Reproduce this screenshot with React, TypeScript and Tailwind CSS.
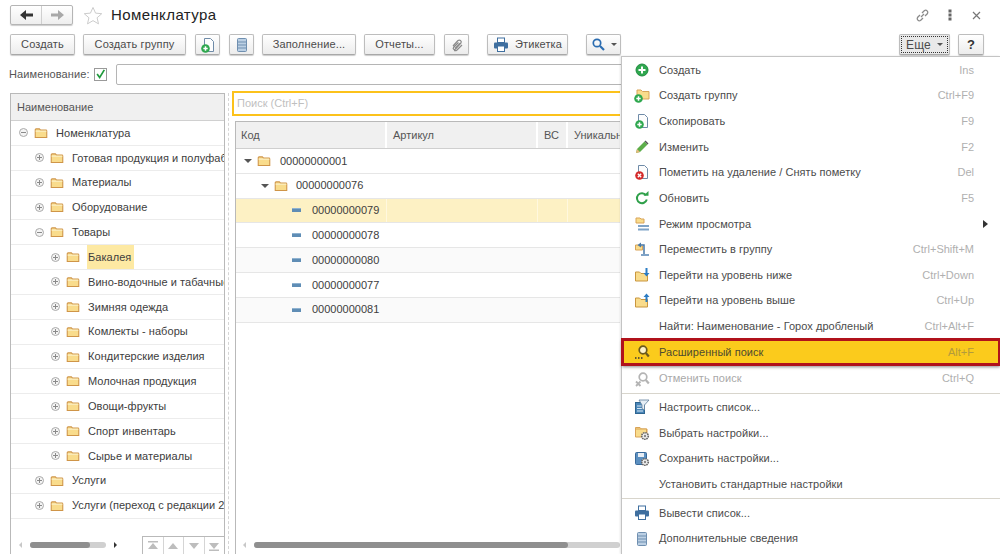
import React from "react";

const Folder = ({ className = "" }: { className?: string }) => (
  <svg width="14" height="12" viewBox="0 0 17 14" className={className}>
    <path d="M1.5 12.5V3a1 1 0 0 1 1-1h4l1.5 1.5h6.5a1 1 0 0 1 1 1v8z" fill="#f9dc8c" stroke="#cf9548" strokeWidth="1.3" />
    <rect x="2" y="4" width="13" height="1.6" fill="#fbeec0" />
  </svg>
);

const Expander = ({ open }: { open?: boolean }) => (
  <svg width="11" height="11" viewBox="0 0 11 11" className="shrink-0">
    <circle cx="5.5" cy="5.5" r="4" fill="#f4f4f4" stroke="#aaaaaa" />
    <rect x="3" y="5" width="5" height="1" fill="#8a8a8a" />
    {!open && <rect x="5" y="3" width="1" height="5" fill="#8a8a8a" />}
  </svg>
);

const Badge = ({ color, kind, x = 0, y = 7 }: { color: string; kind: "plus" | "x"; x?: number; y?: number }) => (
  <g transform={`translate(${x} ${y})`}>
    <circle cx="4.5" cy="4.5" r="4.3" fill={color} />
    {kind === "plus" ? (
      <path d="M2.3 4.5h4.4M4.5 2.3v4.4" stroke="#fff" strokeWidth="1.5" />
    ) : (
      <path d="M2.8 2.8l3.4 3.4M6.2 2.8l-3.4 3.4" stroke="#fff" strokeWidth="1.3" />
    )}
  </g>
);

const Doc = () => <path d="M4.5 1.5h6l3 3v10h-9z" fill="#fdfdfd" stroke="#6f8ba8" strokeWidth="1" />;

const S = ({ children }: { children: React.ReactNode }) => (
  <svg width="16" height="16" viewBox="0 0 16 16">{children}</svg>
);

const IconPlus = () => (
  <S>
    <circle cx="8" cy="8" r="6" fill="#2fa84f" stroke="#1f8a3e" />
    <path d="M4.5 8h7M8 4.5v7" stroke="#fff" strokeWidth="2" />
  </S>
);
const IconFolderPlus = () => (
  <S>
    <path d="M3 11V3h4l1.5 1.5H15V12H3z" fill="#f9dc8c" stroke="#d9a458" />
    <Badge color="#2fa84f" kind="plus" x={0} y={7} />
  </S>
);
const IconDocPlus = () => (
  <S>
    <Doc />
    <Badge color="#2fa84f" kind="plus" x={1} y={7} />
  </S>
);
const IconPencil = () => (
  <S>
    <path d="M2 14l1-4 7.5-7.5 3 3L6 13z" fill="#5cae4a" />
    <path d="M2 14l1-4 3 3z" fill="#e8b878" />
    <path d="M10.5 2.5l3 3 1-1-3-3z" fill="#555" />
  </S>
);
const IconDocX = () => (
  <S>
    <Doc />
    <Badge color="#d42a2a" kind="x" x={1} y={7} />
  </S>
);
const IconRefresh = () => (
  <S>
    <path d="M12 5.2A5 5 0 1 0 12.800 9.500" fill="none" stroke="#2fa04a" strokeWidth="2" />
    <path d="M9.500 5.800h5V1z" fill="#2fa04a" />
  </S>
);
const IconView = () => (
  <S>
    <path d="M2 2h4l1 1h3v4H2z" fill="#f9dc8c" stroke="#d9a458" />
    <rect x="4" y="9" width="11" height="2" fill="#7fa3c7" />
    <rect x="4" y="12.500" width="11" height="2" fill="#7fa3c7" />
  </S>
);
const IconMove = () => (
  <S>
    <path d="M1.500 9V4h3l1 1h3v4z" fill="#f9dc8c" stroke="#d9a458" />
    <path d="M10 14V4H6.500" fill="none" stroke="#4a7aa8" strokeWidth="1.500" />
    <path d="M7 1.500v5L3.500 4z" fill="#4a7aa8" />
    <rect x="7" y="13" width="8" height="2" fill="#7fa3c7" />
  </S>
);
const IconFolderArrow = ({ up }: { up?: boolean }) => (
  <S>
    <path d="M1.500 14V5h4l1.500 1.500h6.500V14z" fill="#f9dc8c" stroke="#c9963f" />
    {up ? (
      <path d="M11.500 9V4H9.500l3-3.500 3 3.500h-2v5z" fill="#2b7cc4" />
    ) : (
      <path d="M11.500 1v5H9.500l3 3.500 3-3.500h-2V1z" fill="#2b7cc4" />
    )}
  </S>
);
const IconSearch = ({ color = "#2b6cb0", dots, x }: { color?: string; dots?: boolean; x?: boolean }) => (
  <S>
    <circle cx="9" cy="6" r="3.800" fill={dots ? "#fdf3c8" : "none"} stroke={color} strokeWidth="1.700" />
    <path d="M11.800 9l3 3.500" stroke={color} strokeWidth="2.200" />
    {dots && <path d="M1 14h1.500M4 14h1.500M7 14h1.500" stroke="#333" strokeWidth="1.500" />}
    {x && <path d="M2 10.500l4.500 4.500M6.500 10.500L2 15" stroke={color} strokeWidth="1.800" />}
  </S>
);
const IconListCfg = () => (
  <S>
    <rect x="1.500" y="3.500" width="9" height="11" fill="#4a86b8" stroke="#2f6590" />
    <path d="M3 7h6M3 9.500h6M3 12h6" stroke="#d8e8f4" />
    <path d="M5 1h10l-4.500 5v5L8 9.500V6z" fill="#e6eef5" stroke="#5f7f9c" strokeWidth="0.800" />
  </S>
);
const Gear = ({ x, y }: { x: number; y: number }) => (
  <g transform={`translate(${x} ${y})`}>
    <circle cx="4.500" cy="4.500" r="3.300" fill="#f2f2f2" stroke="#666" strokeWidth="1.600" strokeDasharray="1.500 0.700" />
    <circle cx="4.500" cy="4.500" r="1.200" fill="#888" />
  </g>
);
const IconFolderGear = () => (
  <S>
    <path d="M1.500 12V2.500h4.500l1.500 1.500h5.500v5" fill="#f9dc8c" stroke="#d9a458" />
    <path d="M1.500 12V4h11v8z" fill="#f9dc8c" stroke="#d9a458" />
    <Gear x={6.500} y={6.500} />
  </S>
);
const IconSaveGear = () => (
  <S>
    <rect x="1.500" y="1.500" width="11" height="12" rx="1" fill="#5b8fc0" stroke="#38699a" />
    <rect x="4" y="2" width="6" height="4" fill="#e8eef5" />
    <Gear x={6.500} y={6.500} />
  </S>
);
const IconPrinter = () => (
  <S>
    <rect x="4.500" y="1" width="7" height="4.500" fill="#fff" stroke="#3f6f9f" />
    <rect x="1" y="5.500" width="14" height="6" rx="1" fill="#3f6f9f" />
    <rect x="4.500" y="9" width="7" height="5.500" fill="#fff" stroke="#3f6f9f" />
  </S>
);
const IconDetails = () => (
  <S>
    <rect x="3.500" y="1.500" width="9" height="13" rx="1" fill="#bcd0e4" stroke="#6f8fb0" />
    <path d="M4 5h8M4 8h8M4 11h8" stroke="#6f8fb0" />
  </S>
);

type MenuRow = { t: string; k?: string; i?: React.ReactNode; arrow?: boolean; hl?: boolean; dim?: boolean };

const group1: MenuRow[] = [
  { t: "Создать", k: "Ins", i: <IconPlus /> },
  { t: "Создать группу", k: "Ctrl+F9", i: <IconFolderPlus /> },
  { t: "Скопировать", k: "F9", i: <IconDocPlus /> },
  { t: "Изменить", k: "F2", i: <IconPencil /> },
  { t: "Пометить на удаление / Снять пометку", k: "Del", i: <IconDocX /> },
  { t: "Обновить", k: "F5", i: <IconRefresh /> },
  { t: "Режим просмотра", i: <IconView />, arrow: true },
  { t: "Переместить в группу", k: "Ctrl+Shift+M", i: <IconMove /> },
  { t: "Перейти на уровень ниже", k: "Ctrl+Down", i: <IconFolderArrow /> },
  { t: "Перейти на уровень выше", k: "Ctrl+Up", i: <IconFolderArrow up /> },
  { t: "Найти: Наименование - Горох дробленый", k: "Ctrl+Alt+F" },
  { t: "Расширенный поиск", k: "Alt+F", i: <IconSearch color="#6b5a1e" dots />, hl: true },
  { t: "Отменить поиск", k: "Ctrl+Q", i: <IconSearch color="#b4b4b4" x />, dim: true },
];
const group2: MenuRow[] = [
  { t: "Настроить список...", i: <IconListCfg /> },
  { t: "Выбрать настройки...", i: <IconFolderGear /> },
  { t: "Сохранить настройки...", i: <IconSaveGear /> },
  { t: "Установить стандартные настройки" },
];
const group3: MenuRow[] = [
  { t: "Вывести список...", i: <IconPrinter /> },
  { t: "Дополнительные сведения", i: <IconDetails /> },
];

const Item = ({ r }: { r: MenuRow }) => (
  <div
    className={
      "flex items-center h-[25.67px] pl-[6px] pr-[26px] shrink-0 " +
      (r.hl
        ? "relative mb-[1px] bg-[#fbcb1c] outline-[3px] outline-[#b0121b] -outline-offset-[2px] shadow-[0_2px_3px_rgba(0,0,0,0.45)] text-[#4d4a30]"
        : r.dim
        ? "text-[#a9a9a9]"
        : "text-[#4b4b4b]")
    }
  >
    <span className="w-[16px] h-[16px] flex items-center justify-center shrink-0 ml-[6px]">{r.i}</span>
    <span className="ml-[9px] flex-1 whitespace-nowrap tracking-[0.05px]">{r.t}</span>
    {r.k && <span className={r.hl ? "text-[#b29a3c]" : "text-[#b0b0b0]"}>{r.k}</span>}
    {r.arrow && (
      <span className="w-0 h-0 border-y-[4px] border-y-transparent border-l-[5px] border-l-[#333] -mr-[14px]" />
    )}
  </div>
);

const Btn = ({ children, className = "" }: { children: React.ReactNode; className?: string }) => (
  <div
    className={
      "h-[21px] flex items-center justify-center rounded-[2px] border border-[#bdbdbd] border-b-[#a8a8a8] bg-gradient-to-b from-[#ffffff] to-[#ececec] shadow-[0_1px_1px_rgba(0,0,0,0.2)] text-[#4b4b4b] tracking-[0.15px] whitespace-nowrap shrink-0 " +
      className
    }
  >
    {children}
  </div>
);

const tree: { t: string; lvl: number; open?: boolean; sel?: boolean }[] = [
  { t: "Номенклатура", lvl: 0, open: true },
  { t: "Готовая продукция и полуфабрикаты", lvl: 1 },
  { t: "Материалы", lvl: 1 },
  { t: "Оборудование", lvl: 1 },
  { t: "Товары", lvl: 1, open: true },
  { t: "Бакалея", lvl: 2, sel: true },
  { t: "Вино-водочные и табачные изделия", lvl: 2 },
  { t: "Зимняя одежда", lvl: 2 },
  { t: "Комлекты - наборы", lvl: 2 },
  { t: "Кондитерские изделия", lvl: 2 },
  { t: "Молочная продукция", lvl: 2 },
  { t: "Овощи-фрукты", lvl: 2 },
  { t: "Спорт инвентарь", lvl: 2 },
  { t: "Сырье и материалы", lvl: 2 },
  { t: "Услуги", lvl: 1 },
  { t: "Услуги (переход с редакции 2.5)", lvl: 1 },
];

const treePad = ["pl-[7px]", "pl-[23px]", "pl-[39px]"];

const codes: { c: string; lvl: number; folder?: boolean; sel?: boolean; alt?: boolean }[] = [
  { c: "00000000001", lvl: 0, folder: true },
  { c: "00000000076", lvl: 1, folder: true },
  { c: "00000000079", lvl: 2, sel: true },
  { c: "00000000078", lvl: 2 },
  { c: "00000000080", lvl: 2, alt: true },
  { c: "00000000077", lvl: 2 },
  { c: "00000000081", lvl: 2, alt: true },
];
const codePad = ["pl-[8px]", "pl-[25px]", "pl-[56px]"];

const NavIcon = ({ i }: { i: number }) => (
  <svg width="12" height="10" viewBox="0 0 12 10" fill="#bdbdbd">
    {i === 0 && <path d="M1 0h10v1.500H1zM6 2l5 6H1z" />}
    {i === 1 && <path d="M6 2l5 6H1z" />}
    {i === 2 && <path d="M6 8L1 2h10z" />}
    {i === 3 && <path d="M1 8.500h10V10H1zM6 8L1 2h10z" />}
  </svg>
);

export default function App() {
  return (
    <div
      className="relative w-[1000px] h-[554px] overflow-hidden bg-white text-[11px] text-[#3d3d3d] flex flex-col"
      style={{ fontFamily: '"Liberation Sans", Arial, sans-serif' }}
    >
      {/* header */}
      <div className="flex items-center h-[29px] pl-[10px] pt-[1px] shrink-0">
        <div className="flex h-[20px] w-[63px] rounded-[2px] border border-[#b5b5b5] bg-gradient-to-b from-white to-[#eeeeee] shadow-[0_1px_1px_rgba(0,0,0,0.2)]">
          <div className="w-[31px] flex items-center justify-center border-r border-[#cfcfcf]">
            <svg width="13" height="10" viewBox="0 0 13 10">
              <path d="M6 0v3.500h7v3H6V10L0 5z" fill="#333" />
            </svg>
          </div>
          <div className="flex-1 flex items-center justify-center">
            <svg width="13" height="10" viewBox="0 0 13 10">
              <path d="M7 0v3.500H0v3h7V10l6-5z" fill="#a8a8a8" />
            </svg>
          </div>
        </div>
        <svg width="20" height="19" viewBox="0 0 21 20" className="ml-[10px]">
          <path d="M10.500 1.500l2.700 6 6.500.6-4.900 4.300 1.500 6.400-5.800-3.400-5.800 3.400 1.500-6.400L1.300 8.100l6.500-.6z" fill="#fff" stroke="#c9c9c9" />
        </svg>
        <div className="ml-[8px] text-[15px] text-[#222] tracking-[0.4px]">Номенклатура</div>
        <div className="ml-auto flex items-center pr-[19px] gap-[18px] text-[#777]">
          <svg width="15" height="15" viewBox="0 0 15 15" fill="none" stroke="#8a8a8a" strokeWidth="1.300">
            <path d="M6 9l3-3" />
            <path d="M5 7L2.500 9.500a2.200 2.200 0 0 0 3 3L8 10" />
            <path d="M7 5l2.500-2.500a2.200 2.200 0 0 1 3 3L10 8" />
          </svg>
          <svg width="4" height="12" viewBox="0 0 4 12">
            <rect x="0.500" y="0.500" width="3" height="3" fill="#666" />
            <rect x="0.500" y="4.500" width="3" height="3" fill="#666" />
            <rect x="0.500" y="8.500" width="3" height="3" fill="#666" />
          </svg>
          <svg width="9" height="9" viewBox="0 0 9 9" stroke="#777" strokeWidth="1.200" className="ml-[2px]">
            <path d="M1 1l7 7M8 1l-7 7" />
          </svg>
        </div>
      </div>

      {/* toolbar */}
      <div className="flex items-center h-[21px] mt-[5px] pl-[10px] shrink-0">
        <Btn className="w-[65px]">Создать</Btn>
        <Btn className="w-[103px] ml-[8px]">Создать группу</Btn>
        <Btn className="w-[25px] ml-[9px]">
          <IconDocPlus />
        </Btn>
        <Btn className="w-[25px] ml-[9px]">
          <IconDetails />
        </Btn>
        <Btn className="w-[94px] ml-[8px]">Заполнение...</Btn>
        <Btn className="w-[71px] ml-[8px]">Отчеты...</Btn>
        <Btn className="w-[25px] ml-[9px]">
          <svg width="14" height="14" viewBox="0 0 14 14" fill="none" stroke="#8a8a8a" strokeWidth="1.200">
            <path d="M3 8l5-5.500a2 2 0 0 1 3 2.500L5.500 11a1.200 1.200 0 0 1-2-1.500L8.500 4.500" />
            <path d="M5 10.500l5.500-5.500M4 12.500a3 3 0 0 0 3-.5l5-5" />
          </svg>
        </Btn>
        <Btn className="w-[81px] ml-[18px] gap-[6px]">
          <IconPrinter />
          <span>Этикетка</span>
        </Btn>
        <Btn className="w-[35px] ml-[18px] gap-[6px] justify-start pl-[5px]">
          <svg width="13" height="13" viewBox="0 0 13 13" fill="none" stroke="#2b6cb0" strokeWidth="1.700">
            <circle cx="5" cy="5" r="3.700" />
            <path d="M8 8l4 4" strokeWidth="2.200" />
          </svg>
          <span className="w-0 h-0 border-x-[3px] border-x-transparent border-t-[3px] border-t-[#555]" />
        </Btn>
        <Btn className="w-[51px] ml-[278px] gap-[6px] bg-none bg-[#e9e9e9] outline-1 outline-dotted outline-[#333] -outline-offset-[3px] text-[12px]">
          <span>Еще</span>
          <span className="w-0 h-0 border-x-[3px] border-x-transparent border-t-[3px] border-t-[#555]" />
        </Btn>
        <Btn className="w-[26px] ml-[8px] font-bold text-[13px] text-[#333]">?</Btn>
      </div>

      {/* filter */}
      <div className="flex items-center h-[21px] mt-[9px] pl-[9px] shrink-0">
        <span className="w-[85px] text-[#555] whitespace-nowrap tracking-[0.1px]">Наименование:</span>
        <span className="w-[13px] h-[13px] border border-[#9a9a9a] bg-white flex items-center justify-center">
          <svg width="13" height="13" viewBox="0 0 13 13" fill="none" stroke="#1f9a3c" strokeWidth="2">
            <path d="M2.500 6l3 4 5.500-9" />
          </svg>
        </span>
        <div className="ml-[9px] w-[520px] h-[21px] border border-[#b5b5b5] rounded-[2px] bg-white" />
      </div>

      {/* body */}
      <div className="flex flex-1 min-h-0 mt-[8px] pl-[10px]">
        {/* left */}
        <div className="w-[215px] shrink-0 border-x border-t border-[#b9b9b9] flex flex-col">
          <div className="h-[27px] shrink-0 bg-[#f0f0f0] border-b border-[#d0d0d0] flex items-center pl-[6px] text-[#555]">
            Наименование
          </div>
          <div className="flex-1 min-h-0">
            {tree.map((n) => (
              <div
                key={n.t}
                className={"h-[24.85px] flex items-center border-b border-[#ececec] overflow-hidden whitespace-nowrap " + treePad[n.lvl]}
              >
                <Expander open={n.open} />
                <Folder className="ml-[5px] shrink-0" />
                <span className={"ml-[7px] px-[1px] h-full flex items-center tracking-[0.05px] " + (n.sel ? "bg-[#fde9a3] pr-[3px]" : "")}>{n.t}</span>
              </div>
            ))}
          </div>
          <div className="h-[18px] shrink-0 flex items-center">
            <span className="ml-[8px] w-0 h-0 border-y-[3px] border-y-transparent border-r-[3px] border-r-[#c8c8c8]" />
            <div className="ml-[8px] w-[76px] h-[6px] rounded-full bg-[#d0d0d0]">
              <div className="w-[60px] h-full rounded-full bg-[#8f8f8f]" />
            </div>
            <span className="ml-[8px] w-0 h-0 border-y-[3px] border-y-transparent border-l-[3px] border-l-[#333]" />
            <div className="ml-[25px] flex-1 h-full flex border-l border-t border-[#b9b9b9]">
              {[0, 1, 2, 3].map((i) => (
                <div key={i} className="flex-1 flex items-center justify-center border-r border-[#d5d5d5] last:border-r-0">
                  <NavIcon i={i} />
                </div>
              ))}
            </div>
          </div>
        </div>

        {/* splitter */}
        <div className="w-[7px] shrink-0 pl-[3px]">
          <div className="h-full w-0 border-r border-dashed border-[#d5d5d5]" />
        </div>

        {/* right */}
        <div className="flex-1 min-w-0 flex flex-col -mt-[2px] pr-[380px]">
          <div className="h-[25px] shrink-0 border-2 border-r-0 border-[#fcc21b] flex items-center pl-[3px] text-[#bfbfbf]">Поиск (Ctrl+F)</div>
          <div className="mt-[5px] ml-[3px] flex-1 min-h-0 border-l border-t border-[#b9b9b9] flex flex-col">
            <div className="h-[27px] shrink-0 flex bg-[#f0f0f0] border-b border-[#cfcfcf] text-[#555]">
              <div className="w-[151px] border-r-2 border-white flex items-center pl-[5px]">Код</div>
              <div className="w-[151px] border-r-2 border-white flex items-center pl-[6px]">Артикул</div>
              <div className="w-[30px] border-r-2 border-white flex items-center pl-[6px]">ВС</div>
              <div className="flex-1 flex items-center pl-[6px] whitespace-nowrap overflow-hidden">Уникальн</div>
            </div>
            <div className="flex-1 min-h-0">
              {codes.map((r) => (
                <div
                  key={r.c}
                  className={
                    "h-[24.8px] flex items-stretch border-b border-[#e6e6e6] " +
                    (r.sel ? "bg-[#fdf1c4]" : r.alt ? "bg-[#fafafa]" : "")
                  }
                >
                  <div className={"w-[151px] flex items-center shrink-0 " + codePad[r.lvl] + (r.sel ? " border-r border-[#fff8de]" : "")}>
                    {r.folder ? (
                      <>
                        <span className="w-0 h-0 border-x-[4px] border-x-transparent border-t-[4px] border-t-[#555]" />
                        <Folder className="ml-[5px]" />
                        <span className={r.lvl === 0 ? "ml-[9px]" : "ml-[8px]"}>{r.c}</span>
                      </>
                    ) : (
                      <>
                        <span className="w-[9px] h-[4px] bg-[#5f8db5] border-t border-[#8fb2d0]" />
                        <span className="ml-[11px]">{r.c}</span>
                      </>
                    )}
                  </div>
                  {r.sel && (
                    <>
                      <div className="w-[151px] border-r border-[#fff8de]" />
                      <div className="w-[30px] border-r border-[#fff8de]" />
                    </>
                  )}
                </div>
              ))}
            </div>
            <div className="h-[18px] shrink-0 flex items-center">
              <span className="ml-[7px] w-0 h-0 border-y-[3px] border-y-transparent border-r-[3px] border-r-[#c8c8c8]" />
              <div className="ml-[8px] flex-1 h-[6px] rounded-full bg-[#d0d0d0]">
                <div className="w-[314px] h-full rounded-full bg-[#8f8f8f]" />
              </div>
            </div>
          </div>
        </div>
      </div>

      {/* dropdown menu */}
      <div className="absolute left-[621px] top-[56px] w-[379px] h-[498px] bg-white border-l border-t border-[#c4c4c4] flex flex-col shadow-[-1px_0_2px_rgba(0,0,0,0.1)]">
        {group1.map((r) => (
          <Item key={r.t} r={r} />
        ))}
        <div className="h-[1px] bg-[#d8d5cc] my-[1px] shrink-0" />
        {group2.map((r) => (
          <Item key={r.t} r={r} />
        ))}
        <div className="h-[1px] bg-[#d8d5cc] my-[1px] shrink-0" />
        {group3.map((r) => (
          <Item key={r.t} r={r} />
        ))}
      </div>
    </div>
  );
}
